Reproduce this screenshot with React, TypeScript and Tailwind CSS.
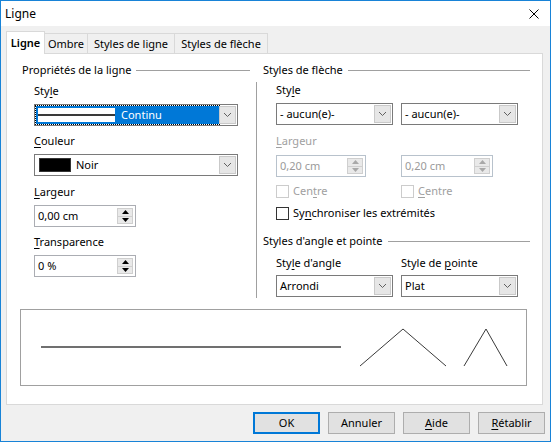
import React from "react";

const Chevron = ({ color = "#606060" }: { color?: string }) => (
  <svg width="9" height="6" viewBox="0 0 9 6">
    <polyline points="1,1 4.5,4.5 8,1" fill="none" stroke={color} strokeWidth="1" />
  </svg>
);

const Dropdown = ({ w, children, disabled }: { w: string; children: React.ReactNode; disabled?: boolean }) => (
  <div className={`${w} h-[22px] border border-[#7a7a7a] bg-white flex items-stretch p-px`}>
    <div className="flex-1 flex items-center pl-[2px] min-w-0">{children}</div>
    <div className="w-[17px] bg-[#e6e6e6] border border-[#c9c9c9] flex items-center justify-center">
      <Chevron color={disabled ? "#a0a0a0" : "#606060"} />
    </div>
  </div>
);

const Tri = ({ up, color }: { up: boolean; color: string }) => (
  <svg width="7" height="4" viewBox="0 0 7 4">
    {up ? <polygon points="0,4 7,4 3.5,0" fill={color} /> : <polygon points="0,0 7,0 3.5,4" fill={color} />}
  </svg>
);

const Spin = ({ w, value, disabled }: { w: string; value: string; disabled?: boolean }) => (
  <div
    className={`${w} h-[22px] border ${disabled ? "border-[#b8c2cc]" : "border-[#abadb3]"} bg-white flex items-stretch py-[2px] pr-[2px]`}
  >
    <div className={`flex-1 flex items-center pl-[3px] ${disabled ? "text-[#9a9a9a]" : "text-black"}`}>{value}</div>
    <div className="w-[16px] flex flex-col">
      <div className="flex-1 bg-[#e9e9e9] border border-[#cfcfcf] flex items-center justify-center">
        <Tri up color={disabled ? "#a8a8a8" : "#000"} />
      </div>
      <div className="flex-1 bg-[#e9e9e9] border border-[#cfcfcf] border-t-0 flex items-center justify-center">
        <Tri up={false} color={disabled ? "#a8a8a8" : "#000"} />
      </div>
    </div>
  </div>
);

const Header = ({ children }: { children: React.ReactNode }) => (
  <div className="h-[16px] flex items-center">
    <span className="whitespace-nowrap">{children}</span>
    <div className="flex-1 h-px bg-[#a0a0a0] ml-[5px] mt-px" />
  </div>
);

const U = ({ children }: { children: React.ReactNode }) => (
  <span className="underline underline-offset-2 decoration-1">{children}</span>
);

const Check = ({ disabled, children }: { disabled?: boolean; children: React.ReactNode }) => (
  <div className={`h-[14px] flex items-center ${disabled ? "text-[#a0a0a0]" : "text-black"}`}>
    <div className={`w-[13px] h-[13px] border bg-white ${disabled ? "border-[#cccccc]" : "border-[#333333]"}`} />
    <span className="ml-[4px] whitespace-nowrap">{children}</span>
  </div>
);

const Btn = ({ children, def }: { children: React.ReactNode; def?: boolean }) => (
  <div
    className={`w-[67px] h-[22px] flex items-center justify-center bg-[#e1e1e1] ${
      def ? "border-2 border-[#0078d7]" : "border border-[#adadad]"
    }`}
  >
    {children}
  </div>
);

export default function App() {
  return (
    <div
      className="w-[551px] h-[442px] border border-[#1883d7] bg-[#f0f0f0] flex flex-col text-[11px] leading-[16px] text-black overflow-hidden"
      style={{ fontFamily: '"Noto Sans", "DejaVu Sans", sans-serif' }}
    >
      {/* Title bar */}
      <div className="h-[25px] bg-white flex items-center justify-between pl-[4px] pr-[11px] text-[12px]">
        <span>Ligne</span>
        <svg width="10" height="10" viewBox="0 0 10 10">
          <line x1="0.5" y1="0.5" x2="9.5" y2="9.5" stroke="#000" strokeWidth="1" />
          <line x1="9.5" y1="0.5" x2="0.5" y2="9.5" stroke="#000" strokeWidth="1" />
        </svg>
      </div>

      {/* Tabs */}
      <div className="h-[27px] flex items-end pl-[5px] relative z-10">
        <div className="w-[39px] h-[23px] -mb-px bg-white border border-b-0 border-[#d9d9d9] flex items-center justify-center font-semibold">
          Ligne
        </div>
        <div className="w-[43px] h-[20px] bg-[#f0f0f0] border border-l-0 border-b-0 border-[#d9d9d9] flex items-center justify-center">
          Ombre
        </div>
        <div className="w-[87px] h-[20px] bg-[#f0f0f0] border border-l-0 border-b-0 border-[#d9d9d9] flex items-center justify-center">
          Styles de ligne
        </div>
        <div className="w-[93px] h-[20px] bg-[#f0f0f0] border border-l-0 border-b-0 border-[#d9d9d9] flex items-center justify-center">
          Styles de flèche
        </div>
      </div>

      {/* Panel */}
      <div className="ml-[5px] w-[537px] h-[352px] bg-white border border-[#d9d9d9] pt-[8px] flex flex-col">
        <div className="flex pl-[15px] h-[236px]">
          {/* Left column */}
          <div className="w-[228px] flex flex-col">
            <Header>Propriétés de la ligne</Header>
            <div className="pl-[12px] flex flex-col">
              <div className="mt-[5px] h-[16px]">
                Sty<U>l</U>e
              </div>
              <div className="mt-[5px] w-[204px] h-[22px] border border-[#7a7a7a] bg-white flex items-stretch p-px">
                <div className="flex-1 bg-[#0078d7] outline outline-1 outline-dotted outline-black flex items-center p-[2px]">
                  <div className="w-[77px] h-full bg-white flex items-center">
                    <div className="w-full h-[2px] bg-[#3a3a3a]" />
                  </div>
                  <span className="ml-[6px] text-white">Continu</span>
                </div>
                <div className="w-[17px] bg-[#e6e6e6] border border-[#c9c9c9] flex items-center justify-center">
                  <Chevron />
                </div>
              </div>
              <div className="mt-[7px] h-[16px]">
                <U>C</U>ouleur
              </div>
              <div className="mt-[5px]">
                <Dropdown w="w-[204px]">
                  <div className="w-[32px] h-[14px] bg-black border border-[#333] ml-[1px]" />
                  <span className="ml-[5px]">Noir</span>
                </Dropdown>
              </div>
              <div className="mt-[8px] h-[16px]">
                <U>L</U>argeur
              </div>
              <div className="mt-[5px]">
                <Spin w="w-[102px]" value="0,00 cm" />
              </div>
              <div className="mt-[7px] h-[16px]">
                <U>T</U>ransparence
              </div>
              <div className="mt-[5px]">
                <Spin w="w-[102px]" value="0 %" />
              </div>
            </div>
          </div>

          {/* Separator */}
          <div className="w-[13px] flex justify-center">
            <div className="mt-[20px] w-px h-[216px] bg-[#a0a0a0]" />
          </div>

          {/* Right column */}
          <div className="w-[267px] flex flex-col">
            <Header>Styles de flèche</Header>
            <div className="pl-[13px] flex flex-col">
              <div className="mt-[4px] h-[16px]">
                Sty<U>l</U>e
              </div>
              <div className="mt-[5px] flex gap-[8px]">
                <Dropdown w="w-[117px]">- aucun(e)-</Dropdown>
                <Dropdown w="w-[117px]">- aucun(e)-</Dropdown>
              </div>
              <div className="mt-[8px] h-[16px] text-[#a0a0a0]">
                <U>L</U>argeur
              </div>
              <div className="mt-[6px] flex gap-[35px]">
                <Spin w="w-[90px]" value="0,20 cm" disabled />
                <Spin w="w-[92px]" value="0,20 cm" disabled />
              </div>
              <div className="mt-[7px] flex">
                <div className="w-[125px]">
                  <Check disabled>
                    Cen<U>t</U>re
                  </Check>
                </div>
                <Check disabled>
                  <U>C</U>entre
                </Check>
              </div>
              <div className="mt-[8px]">
                <Check>
                  Sy<U>n</U>chroniser les extrémités
                </Check>
              </div>
            </div>
            <div className="mt-[13px]">
              <Header>Styles d'angle et pointe</Header>
            </div>
            <div className="pl-[13px] flex">
              <div className="w-[125px] flex flex-col">
                <div className="mt-[6px] h-[16px]">
                  Sty<U>l</U>e d'angle
                </div>
                <div className="mt-[4px]">
                  <Dropdown w="w-[117px]">Arrondi</Dropdown>
                </div>
              </div>
              <div className="flex flex-col">
                <div className="mt-[6px] h-[16px]">
                  Style de <U>p</U>ointe
                </div>
                <div className="mt-[4px]">
                  <Dropdown w="w-[117px]">Plat</Dropdown>
                </div>
              </div>
            </div>
          </div>
        </div>

        {/* Preview */}
        <div className="mt-[11px] ml-[13px] w-[507px] h-[77px] border border-[#a0a0a0] bg-white">
          <svg width="505" height="75" viewBox="0 0 505 75">
            <line x1="20" y1="37" x2="320" y2="37" stroke="#707070" strokeWidth="2" />
            <polyline points="339,56 382,19 425,56" fill="none" stroke="#3a3a3a" strokeWidth="1" />
            <polyline points="443,56 465,19 486,56" fill="none" stroke="#3a3a3a" strokeWidth="1" />
          </svg>
        </div>
      </div>

      {/* Buttons */}
      <div className="mt-[7px] flex justify-end gap-[8px] pr-[5px]">
        <Btn def>OK</Btn>
        <Btn>Annuler</Btn>
        <Btn>
          <U>A</U>ide
        </Btn>
        <Btn>
          <U>R</U>établir
        </Btn>
      </div>
    </div>
  );
}
